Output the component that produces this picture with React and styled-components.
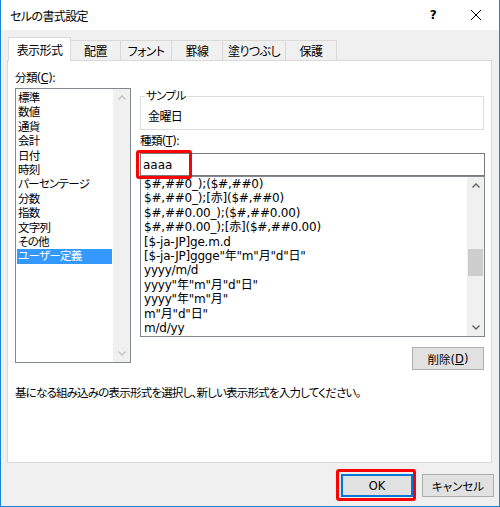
import React from "react";
import styled, { createGlobalStyle } from "styled-components";

const GlobalStyle = createGlobalStyle`
  html, body {
    margin: 0;
    padding: 0;
    background: #fff;
  }
  body {
    font-family: "DejaVu Sans", "Noto Sans CJK JP", sans-serif;
    font-size: 11.5px;
    letter-spacing: -0.6px;
    color: #000;
    font-feature-settings: "palt";
  }
  * {
    box-sizing: border-box;
  }
`;

const tabs = [
  { label: "表示形式", w: 63, active: true },
  { label: "配置", w: 51 },
  { label: "フォント", w: 52 },
  { label: "罫線", w: 52 },
  { label: "塗りつぶし", w: 64 },
  { label: "保護", w: 52 },
];

const categories = [
  "標準",
  "数値",
  "通貨",
  "会計",
  "日付",
  "時刻",
  "パーセンテージ",
  "分数",
  "指数",
  "文字列",
  "その他",
  "ユーザー定義",
];

const formats = [
  "$#,##0_);($#,##0)",
  "$#,##0_);[赤]($#,##0)",
  "$#,##0.00_);($#,##0.00)",
  "$#,##0.00_);[赤]($#,##0.00)",
  "[$-ja-JP]ge.m.d",
  '[$-ja-JP]ggge"年"m"月"d"日"',
  "yyyy/m/d",
  'yyyy"年"m"月"d"日"',
  'yyyy"年"m"月"',
  'm"月"d"日"',
  "m/d/yy",
];

const Chevron = ({ dir, color }) => (
  <svg width="8" height="5" viewBox="0 0 8 5">
    <polyline
      points={dir === "up" ? "0.5,4.5 4,1 7.5,4.5" : "0.5,0.5 4,4 7.5,0.5"}
      fill="none"
      stroke={color}
      strokeWidth="1.4"
    />
  </svg>
);

const App = () => {
  return (
    <>
      <GlobalStyle />
      <Window>
        <TitleBar>
          <Title>セルの書式設定</Title>
          <HelpButton>?</HelpButton>
          <CloseButton>
            <svg width="10" height="10" viewBox="0 0 10 10">
              <path d="M0 0L10 10M10 0L0 10" stroke="#000" strokeWidth="1" />
            </svg>
          </CloseButton>
        </TitleBar>

        <Body>
          <TabRow>
            {tabs.map((t) => (
              <Tab key={t.label} $w={t.w} $active={t.active}>
                {t.label}
              </Tab>
            ))}
          </TabRow>

          <Panel>
            <Columns>
              <LeftCol>
                <FieldLabel>
                  分類(<u>C</u>):
                </FieldLabel>
                <ListBox $h={275}>
                  <ListItems $top={2}>
                    {categories.map((c) => (
                      <Item key={c} $selected={c === "ユーザー定義"}>
                        {c}
                      </Item>
                    ))}
                  </ListItems>
                  <ScrollBar>
                    <ScrollArrow>
                      <Chevron dir="up" color="#c2c2c2" />
                    </ScrollArrow>
                    <ScrollArrow>
                      <Chevron dir="down" color="#c2c2c2" />
                    </ScrollArrow>
                  </ScrollBar>
                </ListBox>
              </LeftCol>

              <RightCol>
                <SampleBox>
                  <SampleLegend>サンプル</SampleLegend>
                  <SampleText>金曜日</SampleText>
                </SampleBox>
                <TypeLabel>
                  種類(<u>T</u>):
                </TypeLabel>
                <InputWrap>
                  <TextInput readOnly value="aaaa" />
                  <Highlight $l={-4} $t={-3} $w={56} $h={29} />
                </InputWrap>
                <ListBox $h={161}>
                  <ListItems $pad={2}>
                    {formats.map((f) => (
                      <Item key={f} $latin>
                        {f}
                      </Item>
                    ))}
                  </ListItems>
                  <ScrollBar>
                    <ScrollArrow>
                      <Chevron dir="up" color="#606060" />
                    </ScrollArrow>
                    <Track>
                      <Thumb $top={55} $h={27} />
                    </Track>
                    <ScrollArrow>
                      <Chevron dir="down" color="#606060" />
                    </ScrollArrow>
                  </ScrollBar>
                </ListBox>
                <DeleteRow>
                  <Button>
                    削除(<u>D</u>)
                  </Button>
                </DeleteRow>
              </RightCol>
            </Columns>
            <Description>
              基になる組み込みの表示形式を選択し、新しい表示形式を入力してください。
            </Description>
          </Panel>

          <ButtonRow>
            <ButtonWrap>
              <Button $primary>OK</Button>
              <Highlight $l={-5} $t={-5} $w={80} $h={32} />
            </ButtonWrap>
            <Button>キャンセル</Button>
          </ButtonRow>
        </Body>
      </Window>
    </>
  );
};

export default App;

const Window = styled.div`
  width: 500px;
  height: 507px;
  background: #f0f0f0;
  border: 1px solid #1883d7;
  border-top: none;
  display: flex;
  flex-direction: column;
`;

const TitleBar = styled.div`
  height: 30px;
  background: #fff;
  display: flex;
  align-items: center;
  flex-shrink: 0;
`;

const Title = styled.div`
  flex: 1;
  padding-left: 9px;
  font-size: 12px;
`;

const HelpButton = styled.div`
  width: 40px;
  height: 30px;
  display: flex;
  align-items: center;
  justify-content: center;
  font-size: 12px;
  font-weight: bold;
`;

const CloseButton = styled.div`
  width: 46px;
  height: 30px;
  display: flex;
  align-items: center;
  justify-content: center;
`;

const Body = styled.div`
  flex: 1;
  display: flex;
  flex-direction: column;
  padding: 7px 7px 9px 6px;
`;

const TabRow = styled.div`
  height: 23px;
  display: flex;
  align-items: flex-end;
  padding-left: 1px;
`;

const Tab = styled.div`
  width: ${(p) => p.$w}px;
  height: ${(p) => (p.$active ? 24 : 20)}px;
  margin-bottom: ${(p) => (p.$active ? -1 : 0)}px;
  margin-right: -1px;
  border: 1px solid #d9d9d9;
  border-bottom: none;
  background: ${(p) => (p.$active ? "#fff" : "#f0f0f0")};
  display: flex;
  align-items: center;
  justify-content: center;
  position: relative;
  z-index: ${(p) => (p.$active ? 1 : 0)};
  white-space: nowrap;
  font-size: 12px;
`;

const Panel = styled.div`
  height: 403px;
  background: #fff;
  border: 1px solid #d9d9d9;
  padding: 9px 6px 0 7px;
  display: flex;
  flex-direction: column;
`;

const Columns = styled.div`
  display: flex;
  gap: 9px;
  align-items: flex-start;
`;

const LeftCol = styled.div`
  width: 116px;
  display: flex;
  flex-direction: column;
`;

const FieldLabel = styled.div`
  height: 16px;
  line-height: 16px;
  margin-bottom: 2px;
`;

const ListBox = styled.div`
  height: ${(p) => p.$h}px;
  border: 1px solid #828790;
  background: #fff;
  display: flex;
`;

const ListItems = styled.div`
  flex: 1;
  min-width: 0;
  padding: ${(p) => p.$top || 0}px 1px 0 ${(p) => p.$pad || 1}px;
`;

const Item = styled.div`
  height: 14.4px;
  line-height: 14.4px;
  padding-left: 1px;
  white-space: nowrap;
  font-size: ${(p) => (p.$latin ? 12 : 11.5)}px;
  letter-spacing: ${(p) => (p.$latin ? "-0.2px" : "-0.7px")};
  background: ${(p) => (p.$selected ? "#3399ff" : "transparent")};
  color: ${(p) => (p.$selected ? "#fff" : "#000")};
`;

const ScrollBar = styled.div`
  width: 17px;
  flex-shrink: 0;
  background: #f0f0f0;
  display: flex;
  flex-direction: column;
  justify-content: space-between;
`;

const ScrollArrow = styled.div`
  height: 17px;
  display: flex;
  align-items: center;
  justify-content: center;
`;

const Track = styled.div`
  flex: 1;
  display: flex;
  flex-direction: column;
  align-items: center;
`;

const Thumb = styled.div`
  margin-top: ${(p) => p.$top}px;
  width: 15px;
  height: ${(p) => p.$h}px;
  background: #cdcdcd;
`;

const RightCol = styled.div`
  width: 345px;
  padding-top: 18px;
  display: flex;
  flex-direction: column;
`;

const SampleBox = styled.fieldset`
  height: 42px;
  margin: 0;
  margin-right: 1px;
  padding: 0 0 0 7px;
  border: 1px solid #dcdcdc;
  min-width: 0;
`;

const SampleLegend = styled.legend`
  padding: 0 1px;
  margin-left: -3px;
  line-height: 16px;
`;

const SampleText = styled.div`
  margin-top: 5px;
  line-height: 16px;
  font-size: 12px;
`;

const TypeLabel = styled.div`
  height: 16px;
  line-height: 16px;
  margin-top: 3px;
  margin-bottom: 4px;
`;

const InputWrap = styled.div`
  position: relative;
  height: 23px;
`;

const TextInput = styled.input`
  width: 100%;
  height: 23px;
  border: 1px solid #7a7a7a;
  padding: 0 2px;
  margin: 0;
  font: inherit;
  font-size: 12px;
  letter-spacing: 0;
  color: #000;
  background: #fff;
  outline: none;
`;

const Highlight = styled.div`
  position: absolute;
  left: ${(p) => p.$l}px;
  top: ${(p) => p.$t}px;
  width: ${(p) => p.$w}px;
  height: ${(p) => p.$h}px;
  border: 3px solid #f00;
  border-radius: 3px;
  pointer-events: none;
`;

const DeleteRow = styled.div`
  display: flex;
  justify-content: flex-end;
  margin-top: 10px;
  padding-right: 1px;
`;

const Button = styled.button`
  width: 72px;
  height: 23px;
  margin: 0;
  padding: 0;
  background: #e1e1e1;
  border: ${(p) => (p.$primary ? "2px solid #0078d7" : "1px solid #adadad")};
  font: inherit;
  color: #000;
  display: flex;
  align-items: center;
  justify-content: center;
`;

const Description = styled.div`
  margin-top: 15px;
  line-height: 16px;
  white-space: nowrap;
  letter-spacing: -0.8px;
`;

const ButtonRow = styled.div`
  display: flex;
  justify-content: flex-end;
  gap: 9px;
  margin-top: 11px;
  margin-right: -2px;
`;

const ButtonWrap = styled.div`
  position: relative;
`;
